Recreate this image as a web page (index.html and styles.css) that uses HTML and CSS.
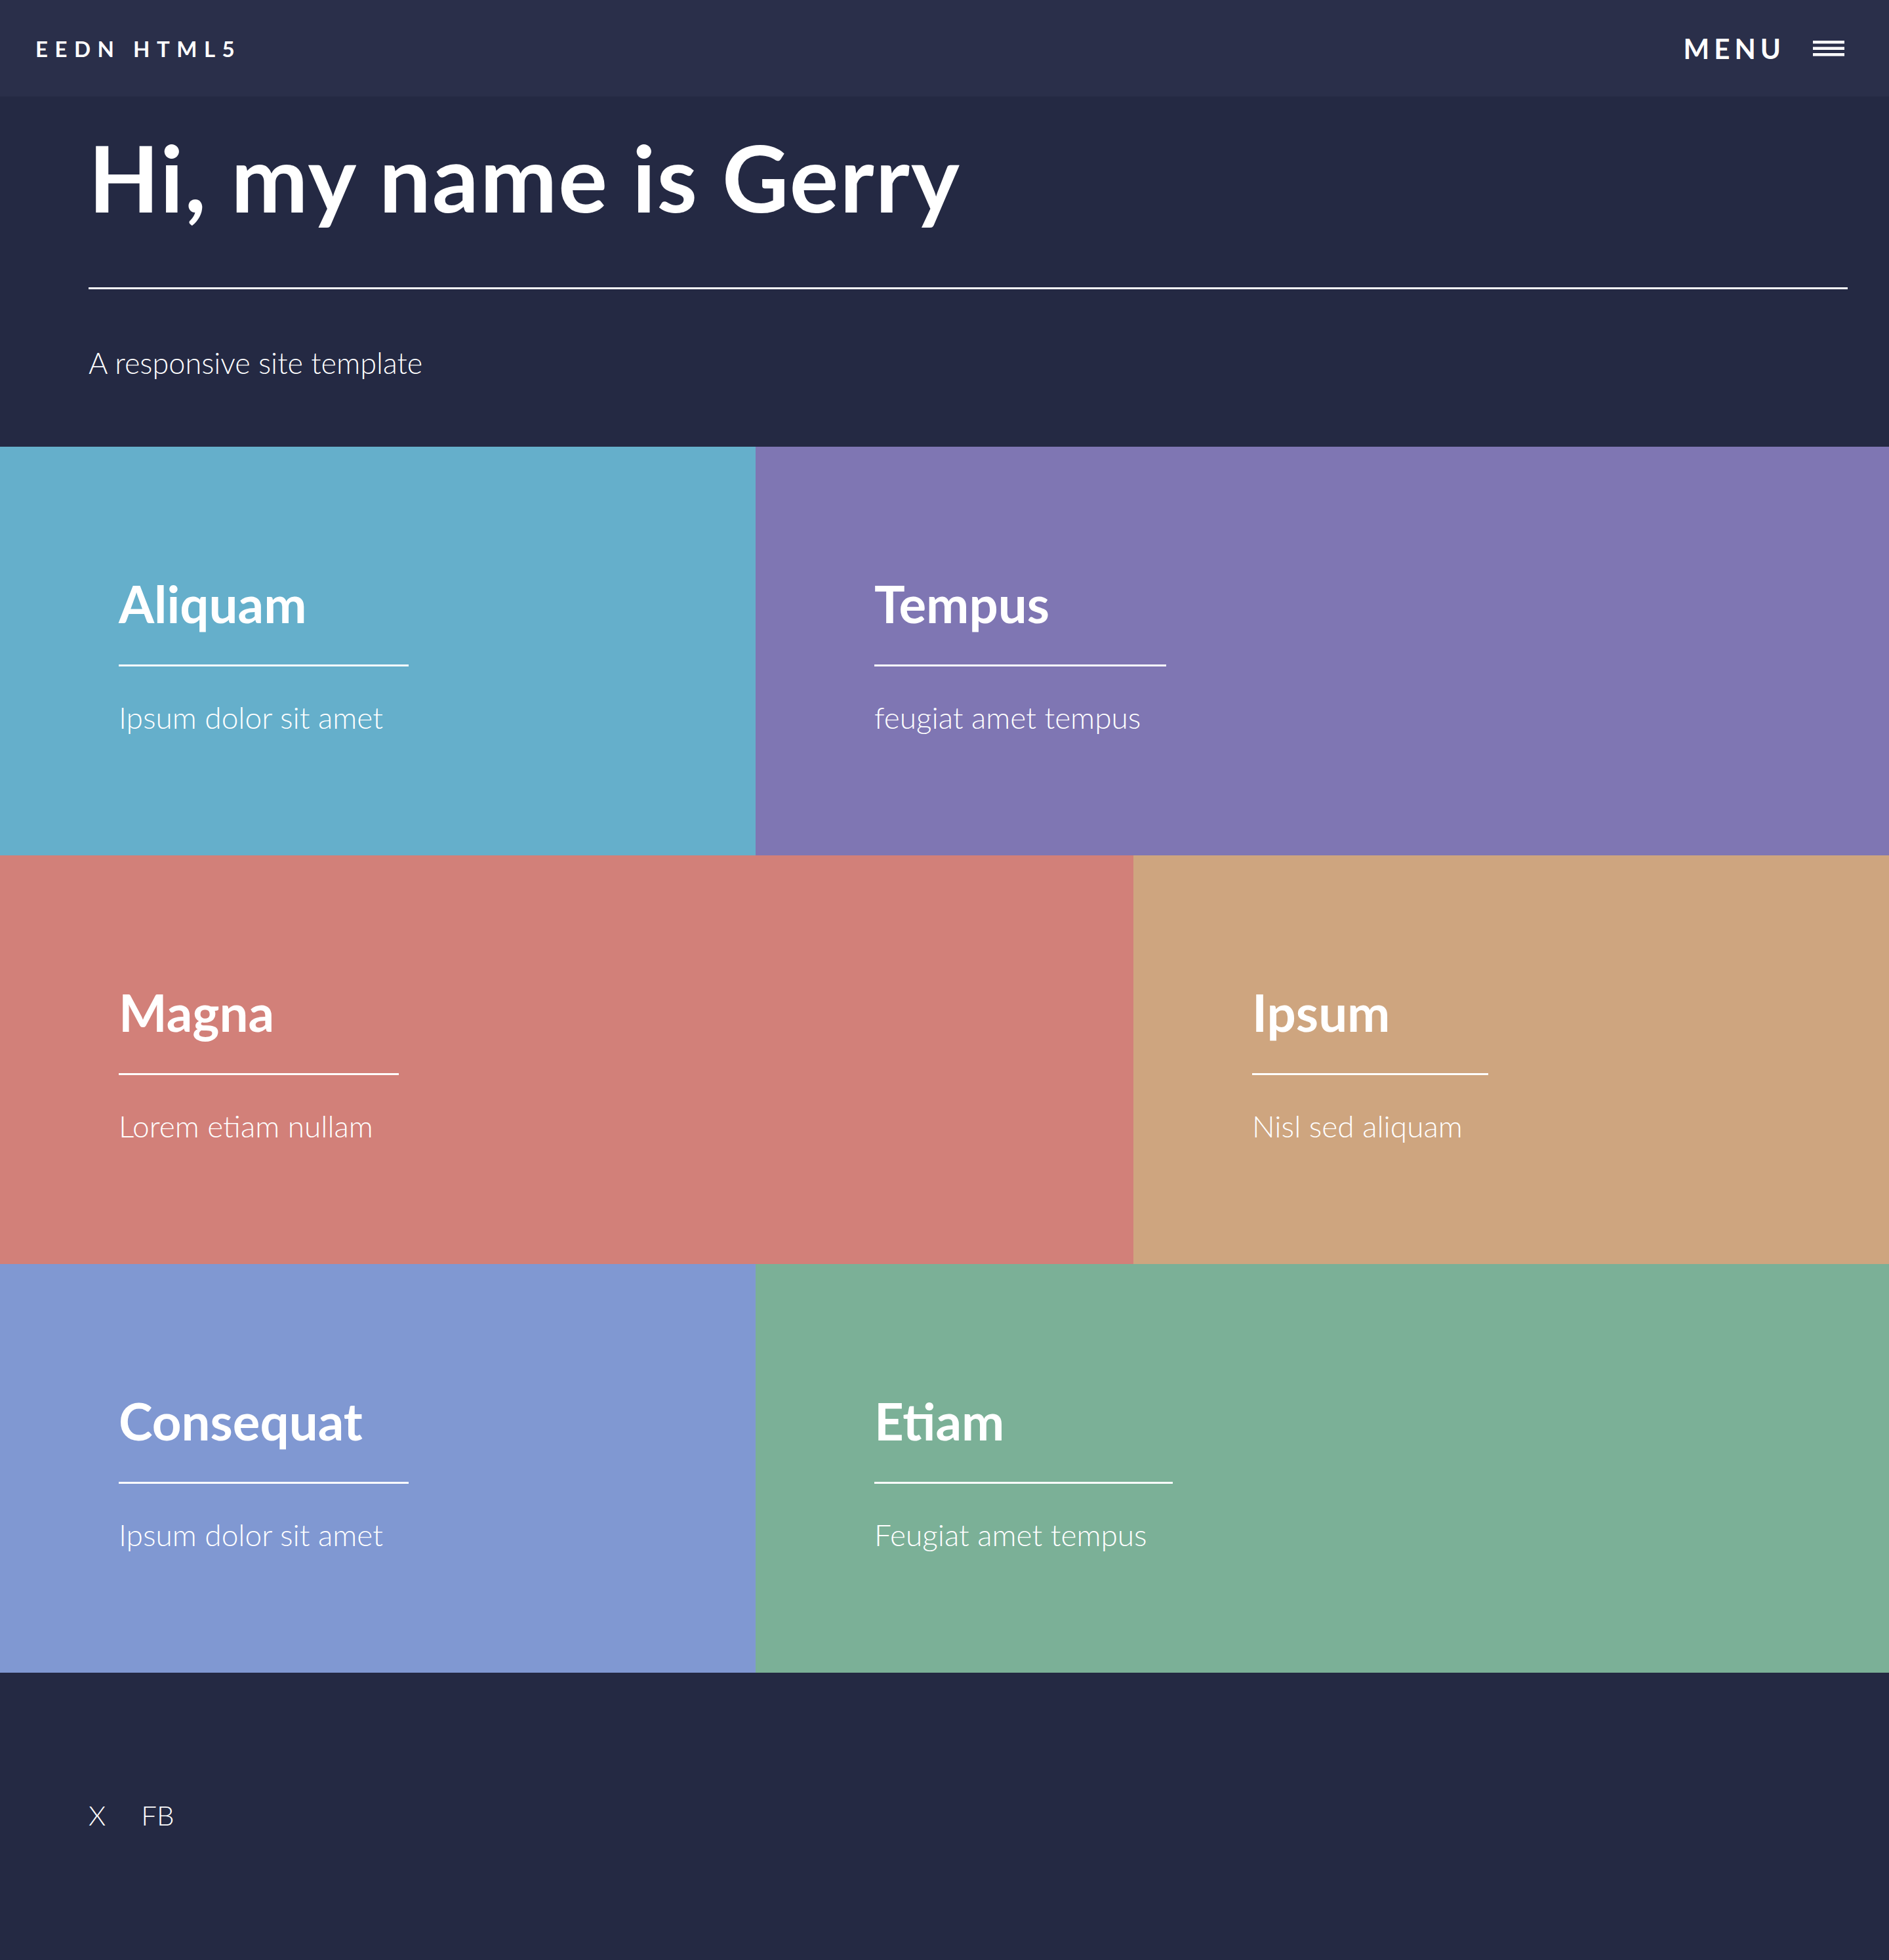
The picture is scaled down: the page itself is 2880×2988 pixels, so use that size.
FILE: index.html
```html
<!DOCTYPE html>
<html lang="en">
<head>
<meta charset="utf-8">
<title>EEDN HTML5</title>
<link rel="stylesheet" href="styles.css">
</head>
<body>
<header class="site-header">
  <div class="logo">EEDN HTML5</div>
  <nav class="menu">
    <span class="menu-label">Menu</span>
    <svg class="menu-icon" width="48" height="24" viewBox="0 0 48 24" aria-hidden="true">
      <rect x="0" y="0" width="48" height="4.5" fill="#ffffff"/>
      <rect x="0" y="9.5" width="48" height="4.5" fill="#ffffff"/>
      <rect x="0" y="19" width="48" height="4.5" fill="#ffffff"/>
    </svg>
  </nav>
</header>

<section class="banner">
  <h1 class="banner-title">Hi, my name is Gerry</h1>
  <div class="banner-rule"></div>
  <p class="banner-text">A responsive site template</p>
</section>

<section class="tiles">
  <article class="tile tile-cyan w40">
    <div class="tile-inner">
      <h3 class="tile-title">Aliquam</h3>
      <p class="tile-text">Ipsum dolor sit amet</p>
    </div>
  </article>
  <article class="tile tile-purple w60">
    <div class="tile-inner">
      <h3 class="tile-title">Tempus</h3>
      <p class="tile-text">feugiat amet tempus</p>
    </div>
  </article>
  <article class="tile tile-red w60">
    <div class="tile-inner">
      <h3 class="tile-title">Magna</h3>
      <p class="tile-text">Lorem etiam nullam</p>
    </div>
  </article>
  <article class="tile tile-tan w40">
    <div class="tile-inner">
      <h3 class="tile-title">Ipsum</h3>
      <p class="tile-text">Nisl sed aliquam</p>
    </div>
  </article>
  <article class="tile tile-blue w40">
    <div class="tile-inner">
      <h3 class="tile-title">Consequat</h3>
      <p class="tile-text">Ipsum dolor sit amet</p>
    </div>
  </article>
  <article class="tile tile-green w60">
    <div class="tile-inner">
      <h3 class="tile-title">Etiam</h3>
      <p class="tile-text">Feugiat amet tempus</p>
    </div>
  </article>
</section>

<footer class="site-footer">
  <a class="social">X</a>
  <a class="social">FB</a>
</footer>
</body>
</html>
```

FILE: styles.css
```css
html, body {
  margin: 0;
  padding: 0;
}
body {
  background: #242943;
  color: #ffffff;
  font-family: Lato, "Open Sans", "Liberation Sans", sans-serif;
  font-weight: 300;
}

/* Header */
.site-header {
  height: 147px;
  background: #2a2f4a;
  display: flex;
  align-items: center;
  justify-content: space-between;
  padding: 0 68px 0 54px;
}
.logo {
  font-size: 33px;
  font-weight: 700;
  letter-spacing: 10.5px;
  text-transform: uppercase;
}
.menu {
  display: flex;
  align-items: center;
  gap: 42px;
}
.menu-label {
  font-size: 42px;
  font-weight: 700;
  letter-spacing: 7px;
  text-transform: uppercase;
}
.menu-icon {
  display: block;
}

/* Banner */
.banner {
  padding: 39px 63px 101px 135px;
}
.banner-title {
  margin: 0;
  font-size: 140px;
  line-height: 1.2;
  font-weight: 700;
  letter-spacing: 2px;
}
.banner-rule {
  height: 3px;
  background: #ffffff;
  margin-top: 84px;
}
.banner-text {
  margin: 85px 0 0 0;
  font-size: 45px;
  line-height: 1.2;
}

/* Tiles */
.tiles {
  display: flex;
  flex-wrap: wrap;
}
.tile {
  height: 623px;
  display: flex;
  align-items: center;
  padding: 10px 0 0 181px;
  box-sizing: border-box;
}
.w40 { width: 40%; }
.w60 { width: 60%; }
.tile-cyan { background: #65afcb; }
.tile-purple { background: #7f76b3; }
.tile-red { background: #d28079; }
.tile-tan { background: #cea57f; }
.tile-blue { background: #8098d2; }
.tile-green { background: #7bb097; }

.tile-inner {
  width: max-content;
}
.tile-title {
  margin: 0;
  font-size: 78px;
  line-height: 1.2;
  font-weight: 700;
}
.tile-title::after {
  content: "";
  display: block;
  width: calc(100% + 0.5em);
  height: 3px;
  background: #ffffff;
  margin-top: 45px;
}
.tile-text {
  margin: 50px 0 0 0;
  font-size: 46px;
  line-height: 1.2;
}

/* Footer */
.site-footer {
  display: flex;
  gap: 54px;
  padding: 192px 135px 196px 135px;
  font-size: 42px;
  line-height: 1.2;
}
.social {
  color: #ffffff;
  text-decoration: none;
}
```
